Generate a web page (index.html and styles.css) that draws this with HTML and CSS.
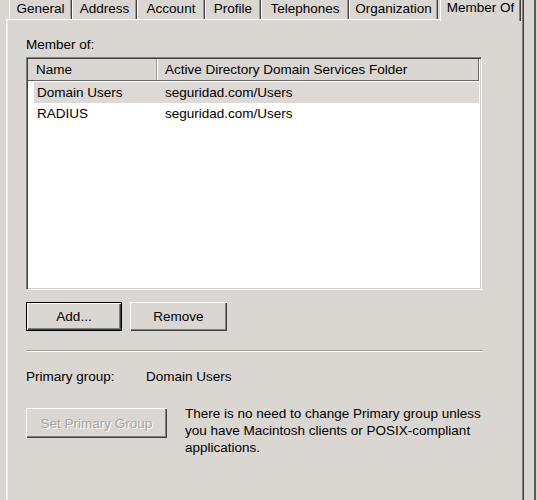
FILE: index.html
```html
<!DOCTYPE html>
<html>
<head>
<meta charset="utf-8">
<link rel="stylesheet" href="styles.css">
</head>
<body>
<div class="window">
  <div class="main">
    <div class="tabs">
      <div class="tab t-general">General</div>
      <div class="tab t-address">Address</div>
      <div class="tab t-account">Account</div>
      <div class="tab t-profile">Profile</div>
      <div class="tab t-phones">Telephones</div>
      <div class="tab t-org">Organization</div>
      <div class="tab active t-member">Member Of</div>
    </div>
    <div class="panel">
      <div class="label">Member of:</div>
      <div class="list">
        <div class="list-head">
          <div class="hcell hname">Name</div>
          <div class="hcell hfolder">Active Directory Domain Services Folder</div>
        </div>
        <div class="row selected">
          <span class="c1">Domain Users</span>
          <span class="c2">seguridad.com/Users</span>
        </div>
        <div class="row">
          <span class="c1">RADIUS</span>
          <span class="c2">seguridad.com/Users</span>
        </div>
      </div>
      <div class="buttons">
        <button class="btn default">Add...</button>
        <button class="btn remove">Remove</button>
      </div>
      <div class="sep"></div>
      <div class="primary">
        <span class="plabel">Primary group:</span>
        <span class="pvalue">Domain Users</span>
      </div>
      <div class="set-row">
        <button class="btn set" disabled>Set Primary Group</button>
        <p class="desc">There is no need to change Primary group unless you have Macintosh clients or POSIX-compliant applications.</p>
      </div>
    </div>
  </div>
  <div class="edge"></div>
</div>
</body>
</html>
```

FILE: styles.css
```css
html, body {
  margin: 0;
  padding: 0;
  background: #dad6d2;
  overflow: hidden;
}

body {
  font-family: "Liberation Sans", Arial, sans-serif;
  font-size: 13.5px;
  color: #000;
  width: 537px;
  height: 500px;
}

.window {
  display: flex;
  height: 500px;
}

.main {
  width: 517px;
  padding-left: 6px;
  display: flex;
  flex-direction: column;
  border-right: 1px solid #404040;
  box-shadow: inset -1px 0 #808080;
}

.tabs {
  height: 19px;
  display: flex;
  align-items: flex-end;
  padding-left: 3px;
}

.tab {
  height: 19px;
  box-sizing: border-box;
  padding-top: 1px;
  line-height: 15px;
  text-align: center;
  border-left: 1px solid #fff;
  border-right: 1px solid #404040;
  box-shadow: inset -1px 0 #a09c98;
  white-space: nowrap;
}

.t-general { width: 63px; }
.t-address { width: 65px; }
.t-account { width: 68px; }
.t-profile { width: 56px; }
.t-phones { width: 88px; }
.t-org { width: 89px; }

.tab.active {
  width: 81px;
  height: 21px;
  margin-bottom: -2px;
  margin-left: 2px;
  padding-top: 0;
  position: relative;
  z-index: 1;
  background: #dad6d2;
  border-right: 1px solid #404040;
  box-shadow: inset -1px 0 #808080;
}

.panel {
  flex: 1;
  margin-right: 1px;
  border-top: 1px solid #fff;
  border-left: 1px solid #fff;
  box-shadow: inset 1px 0 #eeebe8;
  padding: 17px 0 0 19px;
}

.label {
  line-height: 15px;
}

.list {
  margin-top: 5px;
  width: 456px;
  height: 233px;
  box-sizing: border-box;
  background: #fff;
  border-top: 1px solid #808080;
  border-left: 1px solid #808080;
  border-right: 1px solid #fff;
  border-bottom: 1px solid #fff;
  box-shadow: inset 1px 1px #404040, inset -1px -1px #d4d0cc;
  padding: 1px 2px 0 1px;
}

.list-head {
  display: flex;
  height: 22px;
  box-sizing: border-box;
  background: #dad6d2;
  border-bottom: 1px solid #696969;
  margin-bottom: 1px;
}

.hcell {
  line-height: 21px;
  box-sizing: border-box;
  white-space: nowrap;
}

.hname {
  width: 129px;
  padding-left: 8px;
  border-right: 1px solid #a09c98;
}

.hfolder {
  flex: 1;
  padding-left: 7px;
  border-left: 1px solid #fff;
  border-right: 1px solid #696969;
}

.row {
  display: flex;
  height: 21px;
  line-height: 21px;
  margin-left: 6px;
  white-space: nowrap;
}

.row.selected {
  background: #dcd9d6;
}

.c1 {
  width: 128px;
  padding-left: 3px;
}

.buttons {
  display: flex;
  gap: 8px;
  margin-top: 12px;
}

.btn {
  font-family: "Liberation Sans", Arial, sans-serif;
  font-size: 13.5px;
  color: #000;
  height: 29px;
  background: #dad6d2;
  border: none;
  box-shadow: inset 1px 1px #fff, inset -1px -1px #404040, inset -2px -2px #808080;
  padding: 0;
  margin: 0;
}

.btn.default {
  width: 96px;
  border: 1px solid #000;
}

.btn.remove {
  width: 97px;
}

.sep {
  margin-top: 19px;
  width: 457px;
  height: 0;
  border-top: 1px solid #a09c98;
  border-bottom: 1px solid #fff;
}

.primary {
  display: flex;
  margin-top: 17px;
  line-height: 15px;
}

.plabel {
  width: 120px;
}

.set-row {
  display: flex;
  align-items: flex-start;
  margin-top: 21px;
}

.btn.set {
  width: 141px;
  height: 30px;
  margin-top: 3px;
  color: #a8a5a2;
  text-shadow: 1px 1px #fff;
}

.desc {
  margin: 0 0 0 18px;
  width: 300px;
  line-height: 17px;
}

.edge {
  width: 10px;
  border-right: 2px solid #5a5a5a;
}
```
